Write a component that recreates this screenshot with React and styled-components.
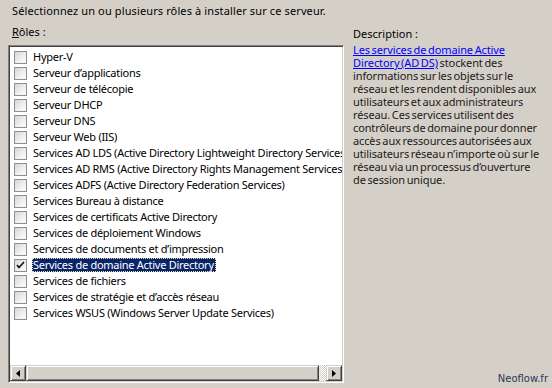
import React from 'react'
import styled, { createGlobalStyle } from 'styled-components'

// Roles shown in the install list
const roles = [
    'Hyper-V',
    'Serveur d’applications',
    'Serveur de télécopie',
    'Serveur DHCP',
    'Serveur DNS',
    'Serveur Web (IIS)',
    'Services AD LDS (Active Directory Lightweight Directory Services)',
    'Services AD RMS (Active Directory Rights Management Services)',
    'Services ADFS (Active Directory Federation Services)',
    'Services Bureau à distance',
    'Services de certificats Active Directory',
    'Services de déploiement Windows',
    'Services de documents et d’impression',
    'Services de domaine Active Directory',
    'Services de fichiers',
    'Services de stratégie et d’accès réseau',
    'Services WSUS (Windows Server Update Services)',
]

const SELECTED = 'Services de domaine Active Directory'

const GlobalStyle = createGlobalStyle`
    html, body {
        margin: 0;
        padding: 0;
        background: #d4d0c8;
    }
    body {
        width: 552px;
        height: 388px;
        overflow: hidden;
        font-family: "Noto Sans", "Open Sans", sans-serif;
        font-size: 11px;
        color: #000;
    }
`

function Check({ checked }) {
    return (
        <CheckBox>
            {checked && (
                <svg width="9" height="9" viewBox="0 0 9 9">
                    <path d="M1 4 L3 6.5 L8 1" fill="none" stroke="#111" strokeWidth="1.6" />
                </svg>
            )}
        </CheckBox>
    )
}

function App() {
    return (
        <Page>
            <GlobalStyle />
            <Intro>Sélectionnez un ou plusieurs rôles à installer sur ce serveur.</Intro>
            <Columns>
                <RolesColumn>
                    <Label><u>R</u>ôles :</Label>
                    <ListBox>
                        <Items>
                            {roles.map((role) => (
                                <Row key={role}>
                                    <Check checked={role === SELECTED} />
                                    <RowText $selected={role === SELECTED}>{role}</RowText>
                                </Row>
                            ))}
                        </Items>
                        <ScrollBar>
                            <ArrowButton>
                                <svg width="4" height="7" viewBox="0 0 4 7"><path d="M4 0 L0 3.5 L4 7Z" fill="#000" /></svg>
                            </ArrowButton>
                            <Thumb />
                            <Track />
                            <ArrowButton>
                                <svg width="4" height="7" viewBox="0 0 4 7"><path d="M0 0 L4 3.5 L0 7Z" fill="#000" /></svg>
                            </ArrowButton>
                        </ScrollBar>
                    </ListBox>
                </RolesColumn>
                <DescColumn>
                    <Label $tight>Description :</Label>
                    <Description>
                        <a href="#">Les services de domaine Active Directory (AD DS)</a> stockent des
                        informations sur les objets sur le réseau et les rendent disponibles aux
                        utilisateurs et aux administrateurs réseau. Ces services utilisent des
                        contrôleurs de domaine pour donner accès aux ressources autorisées aux
                        utilisateurs réseau n’importe où sur le réseau via un processus d’ouverture
                        de session unique.
                    </Description>
                </DescColumn>
            </Columns>
            <Watermark>Neoflow.fr</Watermark>
        </Page>
    )
}

const Page = styled.div`
    position: relative;
    width: 552px;
    height: 388px;
    padding: 4px 8px 0 8px;
    box-sizing: border-box;
`

const Intro = styled.div`
    padding-left: 4px;
    line-height: 14px;
    letter-spacing: 0.12px;
`

const Columns = styled.div`
    display: flex;
    gap: 5px;
    margin-top: 7px;
`

const RolesColumn = styled.div`
    width: 336px;
    flex: none;
    display: flex;
    flex-direction: column;
`

const DescColumn = styled.div`
    flex: 1;
    display: flex;
    flex-direction: column;
    margin-top: 2px;
`

const Label = styled.div`
    padding-left: 4px;
    line-height: 14px;
    margin-bottom: ${(p) => (p.$tight ? '2px' : '6px')};

    u {
        text-decoration: underline;
        text-underline-offset: 1px;
    }
`

const ListBox = styled.div`
    height: 338px;
    box-sizing: border-box;
    border: 1px solid;
    border-color: #808080 #ffffff #ffffff #808080;
    box-shadow: inset 1px 1px #404040, inset -1px -1px #d4d0c8;
    background: #fff;
    display: flex;
    flex-direction: column;
    padding: 1px;
`

const Items = styled.div`
    flex: 1;
    overflow: hidden;
    padding: 2px 0 0 4px;
`

const Row = styled.div`
    display: flex;
    align-items: center;
    height: 16px;
    gap: 5px;
    white-space: nowrap;
    letter-spacing: -0.27px;
`

const CheckBox = styled.span`
    flex: none;
    width: 13px;
    height: 13px;
    box-sizing: border-box;
    border: 1px solid #8f8f8f;
    background: linear-gradient(135deg, #d8d8d4 0%, #f4f4f2 70%, #ffffff 100%);
    display: flex;
    align-items: center;
    justify-content: center;
`

const RowText = styled.span`
    padding: 0 2px 0 1px;
    line-height: 14px;
    background: ${(p) => (p.$selected ? '#0a246a' : 'transparent')};
    color: ${(p) => (p.$selected ? '#fff' : '#000')};
    outline: ${(p) => (p.$selected ? '1px dotted #f0e0a0' : 'none')};
    outline-offset: -1px;
`

const ScrollBar = styled.div`
    display: flex;
    height: 16px;
    flex: none;
`

const ArrowButton = styled.div`
    width: 16px;
    height: 16px;
    box-sizing: border-box;
    background: #d4d0c8;
    border: 1px solid;
    border-color: #d4d0c8 #404040 #404040 #d4d0c8;
    box-shadow: inset 1px 1px #fff, inset -1px -1px #808080;
    display: flex;
    align-items: center;
    justify-content: center;
`

const Thumb = styled(ArrowButton)`
    width: auto;
    flex: 1;
`

const Track = styled.div`
    width: 7px;
    background-color: #fff;
    background-image: conic-gradient(#d4d0c8 25%, #fff 0 50%, #d4d0c8 0 75%, #fff 0);
    background-size: 2px 2px;
`

const Description = styled.div`
    padding-left: 4px;
    line-height: 13px;
    color: #1a1a1a;
    width: 191px;
    letter-spacing: -0.12px;
    word-spacing: -1px;

    a {
        color: #0000ff;
        text-decoration: underline;
    }
`

const Watermark = styled.div`
    position: absolute;
    right: 4px;
    bottom: 4px;
    font-family: "DejaVu Sans", sans-serif;
    font-size: 10px;
    color: #2b3656;
`

export default App
